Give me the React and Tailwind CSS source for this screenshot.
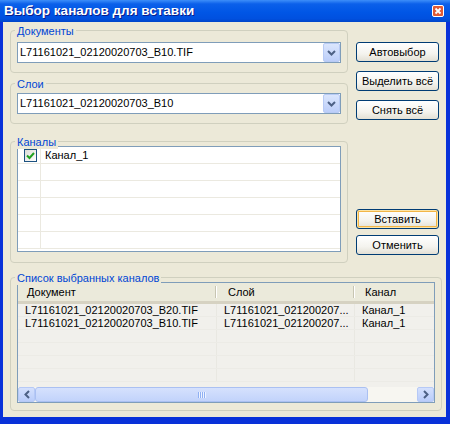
import React from "react";

const btnBase =
  "h-[20px] w-[83px] rounded-[3px] border border-[#003c74] bg-[linear-gradient(to_bottom,#ffffff_0%,#f4f3ee_60%,#e3e0d5_100%)] text-[11px] text-black flex items-center justify-center";

function Button({ children, isDefault, className = "" }) {
  return (
    <div
      className={`${btnBase} ${
        isDefault ? "shadow-[inset_0_0_0_1px_#fce4a6,inset_0_0_0_2px_#f2b648]" : ""
      } ${className}`}
    >
      {children}
    </div>
  );
}

function GroupBox({ label, className = "", children }) {
  return (
    <div className={`relative border border-[#d0d0bf] rounded-[4px] ${className}`}>
      <span className="absolute -top-[7px] left-[4px] bg-[#ece9d8] px-[2px] text-[11px] leading-[14px] text-[#0046d5]">
        {label}
      </span>
      {children}
    </div>
  );
}

function Combo({ value }) {
  return (
    <div className="h-[21px] border border-[#7f9db9] bg-white flex items-center">
      <span className="flex-1 pl-[2px] text-[11px] text-black">{value}</span>
      <div className="w-[17px] h-[19px] rounded-[2px] border border-[#b8cbf5] bg-[linear-gradient(to_bottom,#dbe6fd,#bccef9)] flex items-center justify-center">
        <svg width="9" height="6" viewBox="0 0 9 6">
          <path d="M1 1 L4.5 4.5 L8 1" fill="none" stroke="#4d6185" strokeWidth="2" />
        </svg>
      </div>
    </div>
  );
}

function Checkbox() {
  return (
    <div className="w-[13px] h-[13px] border border-[#1c5180] bg-[linear-gradient(135deg,#dcdcd7,#ffffff)] flex items-center justify-center">
      <svg width="9" height="9" viewBox="0 0 9 9">
        <path d="M1 4.5 L3.5 7 L8 2" fill="none" stroke="#21a121" strokeWidth="2" />
      </svg>
    </div>
  );
}

function ScrollArrow({ dir }) {
  return (
    <div className="w-[17px] h-full rounded-[2px] border border-[#b6c9f6] bg-[linear-gradient(to_bottom,#d4e0fd,#bacdfa)] flex items-center justify-center">
      <svg width="6" height="9" viewBox="0 0 6 9">
        <path
          d={dir === "left" ? "M5 1 L1.5 4.5 L5 8" : "M1 1 L4.5 4.5 L1 8"}
          fill="none"
          stroke="#4d6185"
          strokeWidth="2"
        />
      </svg>
    </div>
  );
}

const selected = [
  { doc: "L71161021_02120020703_B20.TIF", layer: "L71161021_021200207...", ch: "Канал_1" },
  { doc: "L71161021_02120020703_B10.TIF", layer: "L71161021_021200207...", ch: "Канал_1" },
];

export default function App() {
  return (
    <div className="w-[450px] h-[424px] flex flex-col bg-[#0831d9] font-['Liberation_Sans',Arial,sans-serif] overflow-hidden">
      {/* TITLE BAR */}
      <div className="h-[22px] flex items-center justify-between pl-[4px] pr-[6px] bg-[linear-gradient(to_bottom,#3d8ef9_0%,#0b60ea_18%,#0056e6_55%,#0050df_85%,#0045c9_100%)]">
        <span className="text-[13.5px] font-bold text-white [text-shadow:1px_1px_0_#0a1e8c]">
          Выбор каналов для вставки
        </span>
        <div className="w-[12px] h-[12px] rounded-[2px] border border-white bg-[#e05a36] flex items-center justify-center">
          <svg width="8" height="8" viewBox="0 0 8 8">
            <path d="M1.5 1.5 L6.5 6.5 M6.5 1.5 L1.5 6.5" stroke="white" strokeWidth="1.8" />
          </svg>
        </div>
      </div>

      {/* CLIENT */}
      <div className="flex-1 ml-[3px] mr-[4px] mb-[7px] bg-[#ece9d8] pt-[8px] text-[11px] text-black">
        <div className="flex">
          {/* LEFT */}
          <div className="ml-[7px] w-[338px]">
            <GroupBox label="Документы" className="h-[43px] pt-[11px] px-[6px]">
              <Combo value="L71161021_02120020703_B10.TIF" />
            </GroupBox>

            <GroupBox label="Слои" className="mt-[10px] h-[41px] pt-[9px] px-[6px]">
              <Combo value="L71161021_02120020703_B10" />
            </GroupBox>

            <GroupBox label="Каналы" className="mt-[17px] h-[122px] pt-[4px] px-[6px]">
              <div className="h-[106px] border border-[#7f9db9] bg-white">
                {[0, 1, 2, 3, 4, 5].map((i) => (
                  <div key={i} className="h-[17px] flex border-b border-[#ebe9e0]">
                    <div className="w-[23px] border-r border-[#ebe9e0] flex items-center justify-center pl-[2px]">
                      {i === 0 && <Checkbox />}
                    </div>
                    <div className="flex-1 flex items-center pl-[4px]">
                      {i === 0 && "Канал_1"}
                    </div>
                  </div>
                ))}
              </div>
            </GroupBox>
          </div>

          {/* RIGHT */}
          <div className="ml-[8px] pt-[12px] flex flex-col">
            <Button>Автовыбор</Button>
            <Button className="mt-[9px]">Выделить всё</Button>
            <Button className="mt-[9px]">Снять всё</Button>
            <Button isDefault className="mt-[89px]">Вставить</Button>
            <Button className="mt-[6px]">Отменить</Button>
          </div>
        </div>

        {/* SELECTED LIST */}
        <GroupBox label="Список выбранных каналов" className="mt-[14px] ml-[7px] w-[432px] h-[134px] pt-[4px] px-[6px]">
          <div className="h-[121px] border border-[#7f9db9] bg-[#f1f0ec] flex flex-col">
            {/* header */}
            <div className="h-[21px] flex bg-[#ebeadb] border-b-[3px] border-[#d6d2c2]">
              <div className="w-[199px] flex items-center pl-[9px] relative">
                Документ
                <div className="absolute right-0 top-[3px] bottom-[3px] w-[2px] border-l border-[#c7c5b2] bg-white" />
              </div>
              <div className="w-[138px] flex items-center pl-[11px] relative">
                Слой
                <div className="absolute right-0 top-[3px] bottom-[3px] w-[2px] border-l border-[#c7c5b2] bg-white" />
              </div>
              <div className="flex-1 flex items-center pl-[10px]">Канал</div>
            </div>

            {/* rows */}
            <div className="flex-1 overflow-hidden">
              {[0, 1, 2, 3, 4, 5].map((i) => {
                const r = selected[i];
                return (
                  <div key={i} className="h-[13px] flex border-b border-[#ecebe6] leading-[12px]">
                    <div className="w-[199px] pl-[7px] border-r border-[#e9e8e2] whitespace-nowrap overflow-hidden">
                      {r ? r.doc : ""}
                    </div>
                    <div className="w-[138px] pl-[7px] border-r border-[#e9e8e2] whitespace-nowrap overflow-hidden">
                      {r ? r.layer : ""}
                    </div>
                    <div className="flex-1 pl-[7px] whitespace-nowrap">{r ? r.ch : ""}</div>
                  </div>
                );
              })}
            </div>

            {/* horizontal scrollbar */}
            <div className="h-[15px] flex bg-[#f7f6f1]">
              <ScrollArrow dir="left" />
              <div className="flex-1 flex pr-[49px]">
                <div className="flex-1 rounded-[3px] border border-[#aac0f2] bg-[linear-gradient(to_bottom,#d5e1fd,#c2d3fb)] flex items-center justify-center gap-[1px]">
                  {[0, 1, 2, 3].map((g) => (
                    <div key={g} className="w-[1px] h-[6px] bg-[#8fb0f3] shadow-[1px_0_0_#eef3ff]" />
                  ))}
                </div>
              </div>
              <ScrollArrow dir="right" />
            </div>
          </div>
        </GroupBox>
      </div>
    </div>
  );
}
